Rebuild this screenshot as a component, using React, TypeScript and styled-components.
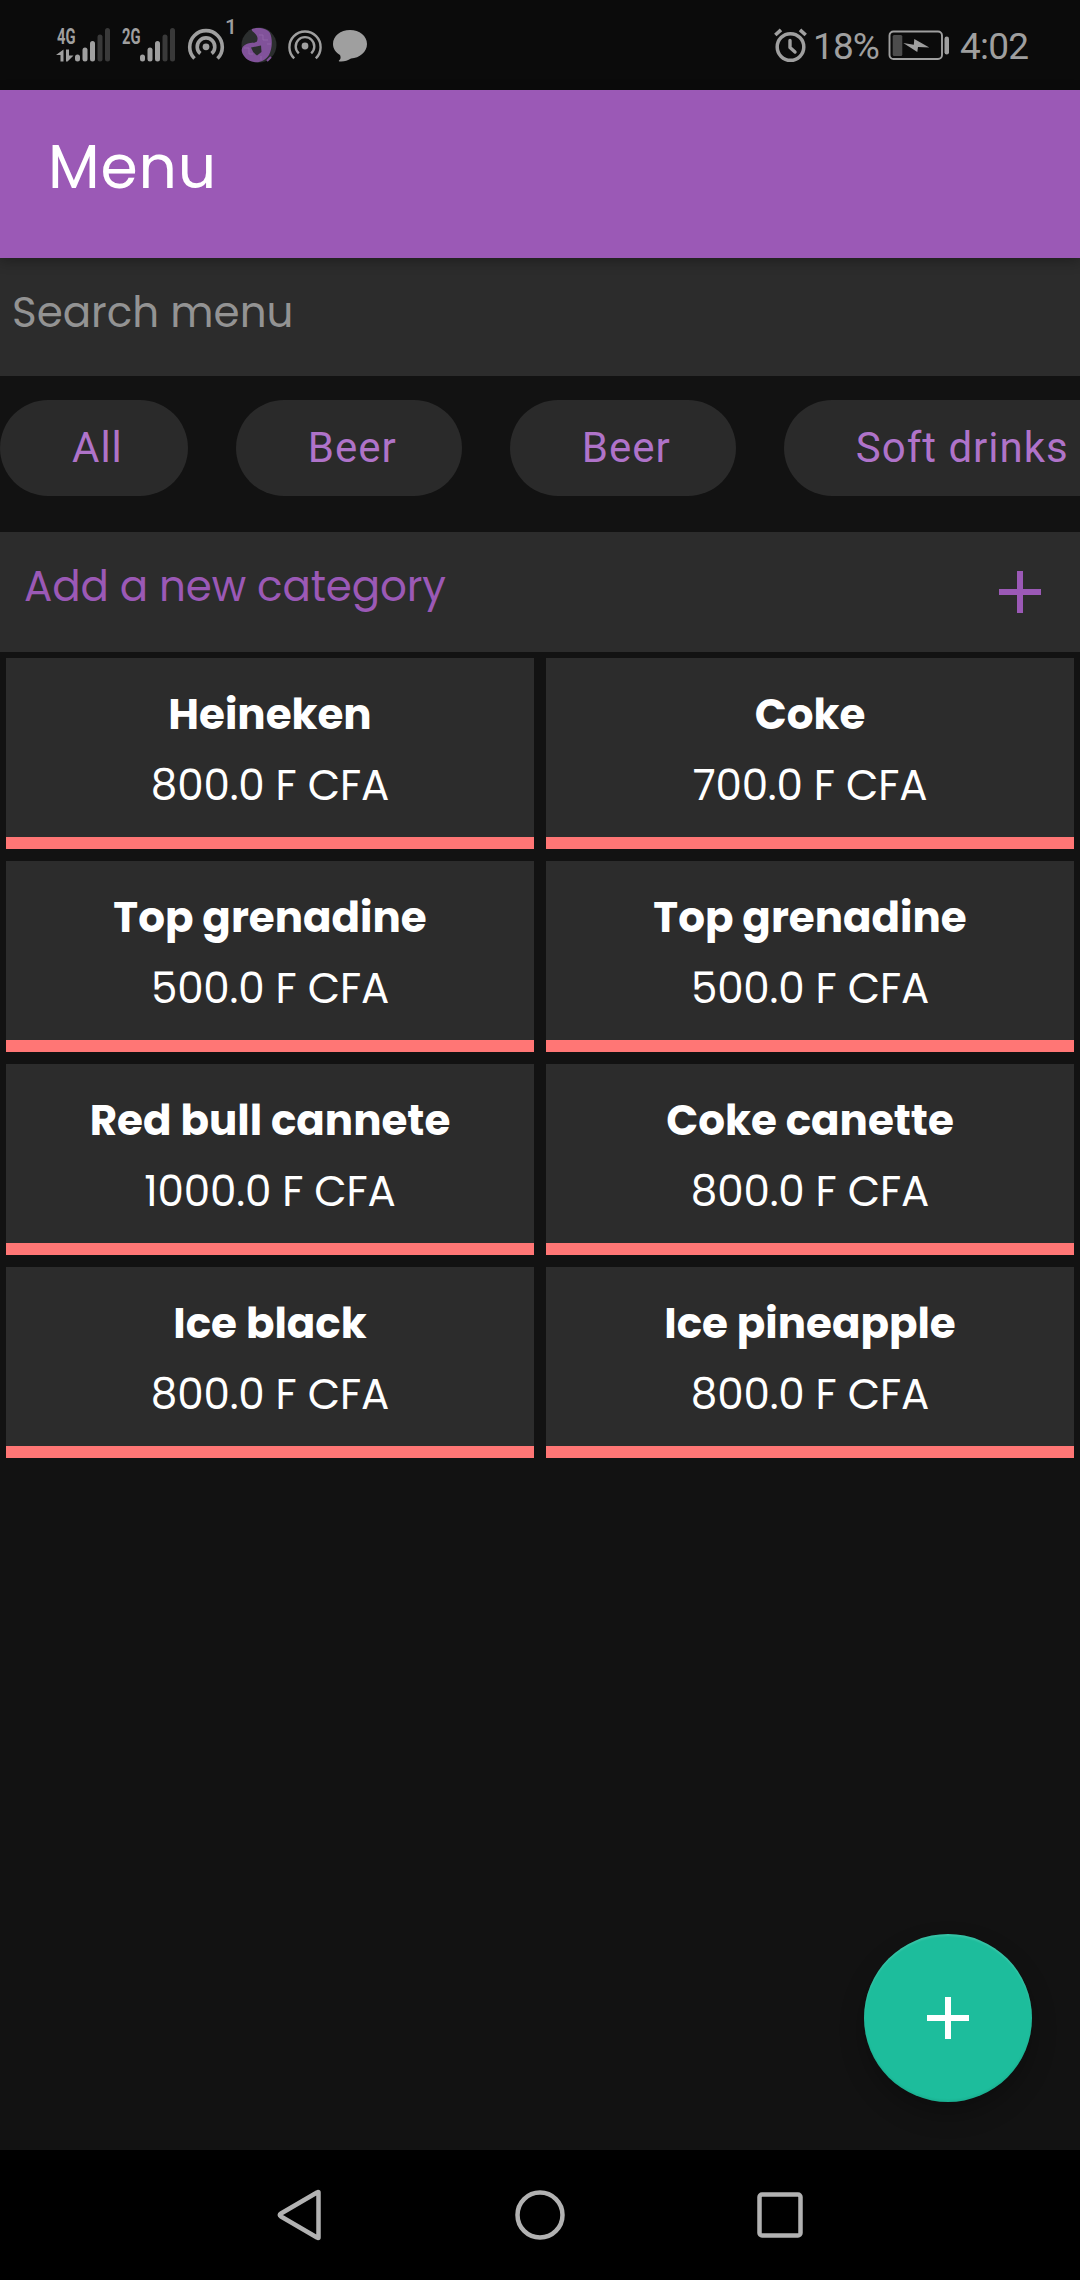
import React from 'react';
import styled, { createGlobalStyle } from 'styled-components';

const color = {
  page: '#121212',
  status: '#0b0b0b',
  surface: '#2c2c2c',
  chip: '#2a2a2a',
  primary: '#9b59b6',
  primaryLight: '#af73c9',
  danger: '#ff7675',
  accent: '#1dbd9c',
  system: '#9f9f9f',
  systemDim: '#393939',
};

const GlobalStyle = createGlobalStyle`
  * { box-sizing: border-box; }
  body { margin: 0; background: ${color.page}; }
`;

const Screen = styled.div`
  position: relative;
  display: flex;
  flex-direction: column;
  width: 1080px;
  height: 2280px;
  overflow: hidden;
  background: ${color.page};
  color: #fff;
  font-family: Poppins, Inter, 'Open Sans', sans-serif;
  font-size: 42px;
  white-space: nowrap;
`;

const StatusBar = styled.div`
  display: flex;
  align-items: center;
  justify-content: space-between;
  flex: none;
  height: 90px;
  padding: 0 51px 0 54px;
  background: ${color.status};
  color: ${color.system};
  font-family: Roboto, sans-serif;
`;

const StatusGroup = styled.div`
  display: flex;
  align-items: center;
`;

const Glyph = styled.svg`
  display: block;
  flex: none;
`;

const StatusText = styled.span<{ $width: number; $tracking: number }>`
  width: ${(p) => p.$width}px;
  padding-top: 3px;
  font-size: 37px;
  line-height: 44px;
  letter-spacing: ${(p) => p.$tracking}px;
`;

const AppBar = styled.header`
  position: relative;
  z-index: 1;
  display: flex;
  align-items: center;
  flex: none;
  height: 168px;
  padding: 0 48px 15px;
  background: ${color.primary};
  box-shadow: 0 3px 12px rgba(0, 0, 0, 0.3);
`;

const Title = styled.h1`
  margin: 0;
  font-size: 60px;
  font-weight: 400;
  line-height: 80px;
  letter-spacing: 0.8px;
`;

const SearchField = styled.input`
  display: block;
  flex: none;
  width: 100%;
  height: 118px;
  padding: 0 12px 9px;
  border: 0;
  border-radius: 0;
  outline: 0;
  background: ${color.surface};
  color: #fff;
  font: inherit;
  &::placeholder {
    color: #939393;
    opacity: 1;
  }
`;

const Chips = styled.nav`
  display: flex;
  align-items: flex-start;
  gap: 48px;
  flex: none;
  height: 156px;
  padding-top: 24px;
  overflow: hidden;
`;

const Chip = styled.button`
  flex: none;
  height: 96px;
  padding: 0 65px 2px 72px;
  border: 0;
  border-radius: 48px;
  background: ${color.chip};
  color: ${color.primaryLight};
  font-family: Roboto, sans-serif;
  font-size: 42px;
  letter-spacing: 1px;
`;

const CategoryRow = styled.div`
  display: flex;
  align-items: center;
  justify-content: space-between;
  flex: none;
  height: 120px;
  padding: 0 39px 0 24px;
  background: ${color.surface};
  color: ${color.primary};
`;

const CategoryLabel = styled.span`
  padding-bottom: 10px;
  line-height: 60px;
  letter-spacing: -0.14px;
`;

const Grid = styled.main`
  display: grid;
  grid-template-columns: 1fr 1fr;
  grid-auto-rows: 191px;
  gap: 12px;
  padding: 6px;
`;

const Card = styled.article`
  display: flex;
  flex-direction: column;
  align-items: center;
  padding-top: 21px;
  border-bottom: 12px solid ${color.danger};
  background: ${color.surface};
  line-height: 71px;
`;

const ItemName = styled.strong`
  font-weight: 700;
`;

const ItemPrice = styled.span`
  font-weight: 400;
  letter-spacing: -0.15px;
`;

const Fab = styled.button`
  position: absolute;
  right: 48px;
  bottom: 178px;
  display: flex;
  align-items: center;
  justify-content: center;
  width: 168px;
  height: 168px;
  padding: 0;
  border: 0;
  border-radius: 50%;
  background: ${color.accent};
  color: #fff;
  box-shadow:
    0 12px 24px rgba(0, 0, 0, 0.25),
    inset 0 2px 2px rgba(255, 255, 255, 0.12),
    inset 0 -2px 2px rgba(0, 0, 0, 0.06);
`;

const NavBar = styled.footer`
  display: flex;
  align-items: center;
  justify-content: center;
  gap: 190px;
  flex: none;
  height: 130px;
  margin-top: auto;
  background: #000;
`;

function PlusIcon() {
  return (
    <Glyph width="42" height="42" viewBox="0 0 42 42" fill="currentColor">
      <path d="M18 0h6v18h18v6H24v18h-6V24H0v-6h18z" />
    </Glyph>
  );
}

function SignalIcon({ label, data }: { label: string; data?: boolean }) {
  return (
    <Glyph width="65" height="40" viewBox="0 0 65 40" fill={color.system}>
      <text x="3" y="18.5" fontSize="21.5" fontWeight="700" textLength="18.5" lengthAdjust="spacingAndGlyphs">
        {label}
      </text>
      {data && <path d="M9.5 24.5v12h-3v-6.5h-4.5zM12 24.5h3v6h4.5L13.5 36.5H12z" />}
      <rect x="21" y="29.5" width="5" height="7" rx="2.5" />
      <rect x="28.5" y="22.5" width="5" height="14" rx="2.5" />
      <rect x="36" y="16" width="5" height="20.5" rx="2.5" />
      <rect x="43.5" y="9.5" width="5" height="27" rx="2.5" fill={color.systemDim} />
      <rect x="51" y="3" width="5" height="33.5" rx="2.5" fill={color.systemDim} />
    </Glyph>
  );
}

function HotspotIcon({ count }: { count: string }) {
  return (
    <Glyph width="52" height="60" viewBox="0 0 52 60" fill="none" stroke={color.system}>
      <path d="M8.5 43.5A16.3 16.3 0 1 1 31.5 43.5" strokeWidth="3.6" />
      <path d="M14.4 38.5A8.8 8.8 0 1 1 25.6 38.5" strokeWidth="3.6" />
      <circle cx="20" cy="31.8" r="3.4" fill={color.system} stroke="none" />
      <text x="39" y="19" fontSize="21" fontWeight="500" fill={color.system} stroke="none">
        {count}
      </text>
    </Glyph>
  );
}

function AvatarIcon() {
  return (
    <Glyph width="36" height="36" viewBox="0 0 36 36">
      <circle cx="18" cy="18" r="17.5" fill="#2b2e2e" />
      <path
        fill="#81529a"
        d="M11 2C17 0 26 1 29 6C32 13 31 22 28 28C24 34 18 36 13 35C7 34 2 30 .7 24C.7 20 3 18 7 16.5C10 15.5 13 16 15.5 15C17.5 12 16.5 9 14 6.5C12 4.5 10 3.5 11 2Z"
      />
      <path fill="#2b2e2e" d="M10 20.5L20 18.5L20.5 25L16 28.5Q11.5 25.5 10 20.5Z" />
      <path fill="none" stroke="#9668ac" strokeWidth="0.8" d="M18 8h4v5h5M3 21h5v6h4M20 29v4M26 17h4" />
      <path stroke="#81529a" strokeWidth="2" d="M26 34l4-4" />
    </Glyph>
  );
}

function CastIcon() {
  return (
    <Glyph width="34" height="36" viewBox="0 0 34 36" fill="none" stroke={color.system} strokeWidth="2.4">
      <path d="M6.2 31.4A15.6 15.6 0 1 1 27.8 31.4" />
      <path d="M10.8 26.4A9.3 9.3 0 1 1 23.2 26.4" />
      <circle cx="17" cy="19" r="3.4" fill={color.system} stroke="none" />
    </Glyph>
  );
}

function ChatIcon() {
  return (
    <Glyph width="34" height="34" viewBox="0 0 34 34" fill={color.system}>
      <path d="M17 2C26.5 2 34 8 34 16S26.5 30 18 30.5C14.5 32.5 11 34 6.5 33.5C5.5 33.3 5.6 32.6 6.5 32C8 30.7 7.7 28.8 7 27C3 24.5 0 21 0 16C0 8 7.5 2 17 2Z" />
    </Glyph>
  );
}

function AlarmIcon() {
  return (
    <Glyph width="36" height="36" viewBox="0 0 36 36" fill="none" stroke={color.system} strokeLinecap="round">
      <circle cx="17.5" cy="20" r="13.3" strokeWidth="3.5" />
      <path d="M17 13.5v7l5 4.5" strokeWidth="3.4" strokeLinejoin="round" />
      <path d="M2.3 8L8 2.8M27 2.8L32.7 8" strokeWidth="3.6" strokeLinecap="butt" />
    </Glyph>
  );
}

function BatteryIcon() {
  return (
    <Glyph width="61" height="30" viewBox="0 0 61 30" fill={color.system}>
      <rect x="1.5" y="1.5" width="52.5" height="27.5" rx="4" fill="none" stroke={color.system} strokeWidth="1.9" />
      <rect x="4.7" y="5" width="9.6" height="21" rx="1.5" fill="#4c4c4c" />
      <path d="M15.3 13L25.8 14.7L26.3 9L41.3 17.6L30 16.9L29.3 22Z" />
      <rect x="56.5" y="6.5" width="4.5" height="18" rx="2.25" />
    </Glyph>
  );
}

const Spaced = styled.span<{ $left: number }>`
  display: flex;
  margin-left: ${(p) => p.$left}px;
`;

const categories = ['All', 'Beer', 'Beer', 'Soft drinks'];

const items = [
  { name: 'Heineken', price: '800.0 F CFA' },
  { name: 'Coke', price: '700.0 F CFA' },
  { name: 'Top grenadine', price: '500.0 F CFA' },
  { name: 'Top grenadine', price: '500.0 F CFA' },
  { name: 'Red bull cannete', price: '1000.0 F CFA' },
  { name: 'Coke canette', price: '800.0 F CFA' },
  { name: 'Ice black', price: '800.0 F CFA' },
  { name: 'Ice pineapple', price: '800.0 F CFA' },
];

export default function App() {
  return (
    <>
      <GlobalStyle />
      <Screen>
        <StatusBar>
          <StatusGroup>
            <SignalIcon label="4G" data />
            <SignalIcon label="2G" />
            <Spaced $left={2}>
              <HotspotIcon count="1" />
            </Spaced>
            <Spaced $left={3}>
              <AvatarIcon />
            </Spaced>
            <Spaced $left={11}>
              <CastIcon />
            </Spaced>
            <Spaced $left={11}>
              <ChatIcon />
            </Spaced>
          </StatusGroup>
          <StatusGroup>
            <AlarmIcon />
            <Spaced $left={4}>
              <StatusText $width={75} $tracking={-0.9}>18%</StatusText>
            </Spaced>
            <BatteryIcon />
            <Spaced $left={11}>
              <StatusText $width={69} $tracking={-0.8}>4:02</StatusText>
            </Spaced>
          </StatusGroup>
        </StatusBar>
        <AppBar>
          <Title>Menu</Title>
        </AppBar>
        <SearchField placeholder="Search menu" />
        <Chips>
          {categories.map((label, i) => (
            <Chip key={i}>{label}</Chip>
          ))}
        </Chips>
        <CategoryRow>
          <CategoryLabel>Add a new category</CategoryLabel>
          <PlusIcon />
        </CategoryRow>
        <Grid>
          {items.map((item, i) => (
            <Card key={i}>
              <ItemName>{item.name}</ItemName>
              <ItemPrice>{item.price}</ItemPrice>
            </Card>
          ))}
        </Grid>
        <NavBar>
          <Glyph width="50" height="54" viewBox="0 0 50 54" fill="none" stroke="#b2b2b2" strokeWidth="4.5">
            <path d="M43.5 4.5V49.5Q43.5 50.5 42 49.5L6 28.5Q3.5 27 6 25.5L42 4.5Q43.5 3.5 43.5 4.5Z" strokeLinejoin="round" />
          </Glyph>
          <Glyph width="50" height="50" viewBox="0 0 50 50" fill="none" stroke="#b2b2b2" strokeWidth="4.5">
            <circle cx="25" cy="25" r="22.5" />
          </Glyph>
          <Glyph width="50" height="50" viewBox="0 0 50 50" fill="none" stroke="#b2b2b2" strokeWidth="4.5">
            <rect x="4.5" y="4.5" width="41" height="41" rx="2.5" />
          </Glyph>
        </NavBar>
        <Fab aria-label="Add item">
          <PlusIcon />
        </Fab>
      </Screen>
    </>
  );
}
